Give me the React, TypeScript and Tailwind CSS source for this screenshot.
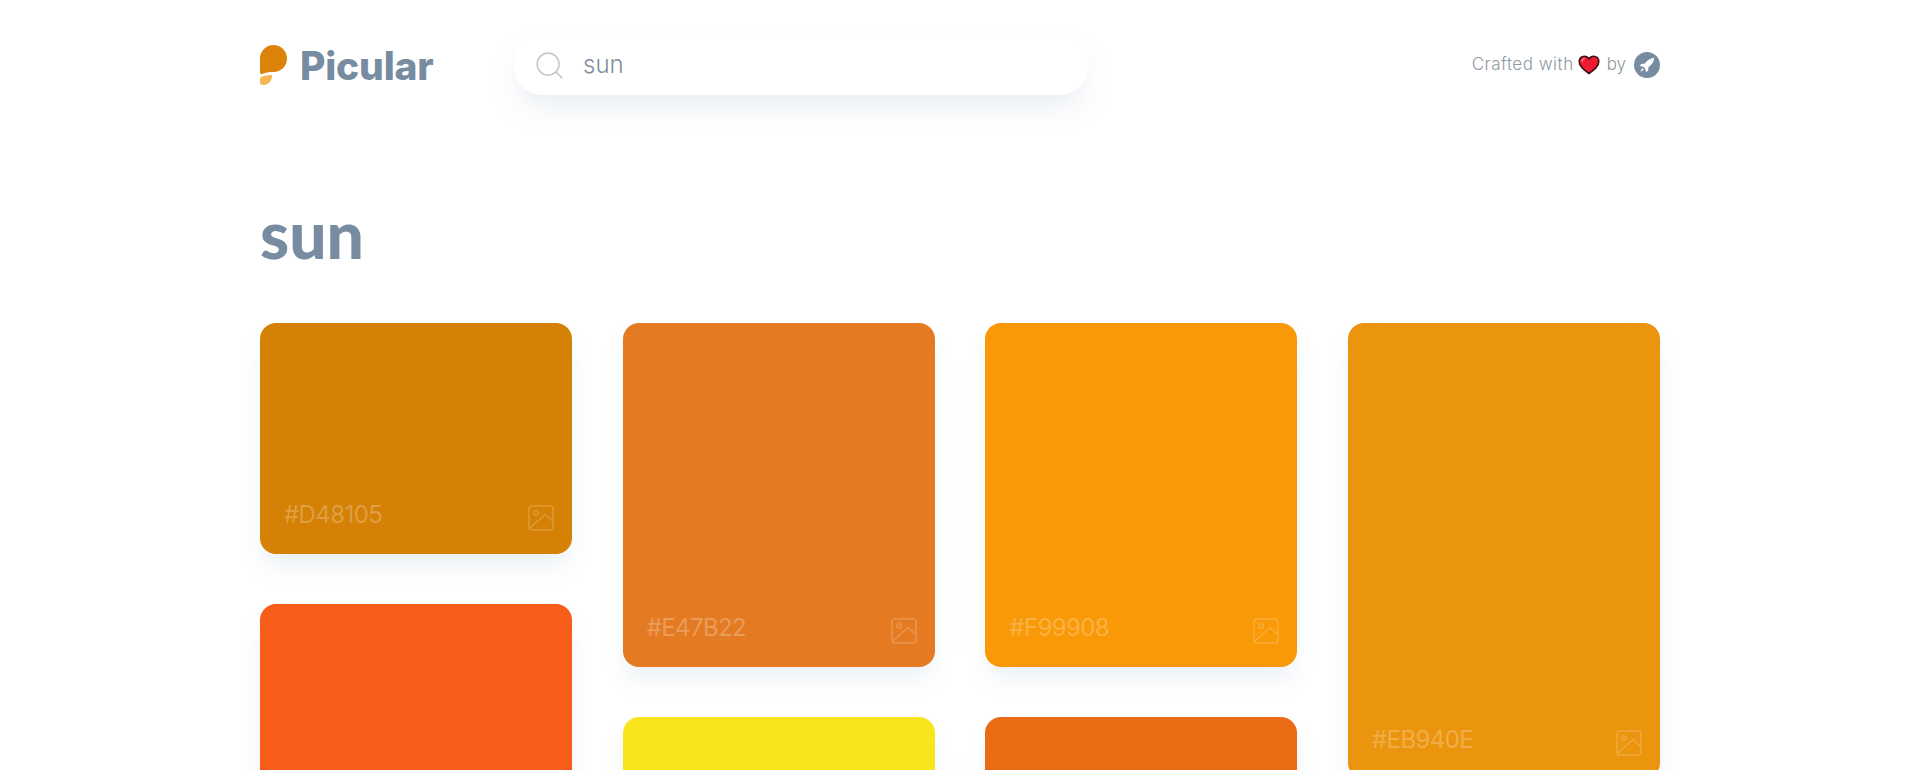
import React from 'react';
import { Search } from 'lucide-react';

interface Swatch {
  color: string;
  height: string;
  hex?: string;
}

const columns: Swatch[][] = [
  [
    { color: 'bg-[#D48105]', height: 'h-[231px]', hex: '#D48105' },
    { color: 'bg-[#F85C1A]', height: 'h-[344px]' },
  ],
  [
    { color: 'bg-[#E47B22]', height: 'h-[344px]', hex: '#E47B22' },
    { color: 'bg-[#F8E51C]', height: 'h-[344px]' },
  ],
  [
    { color: 'bg-[#F99908]', height: 'h-[344px]', hex: '#F99908' },
    { color: 'bg-[#EB6A14]', height: 'h-[344px]' },
  ],
  [{ color: 'bg-[#EB940E]', height: 'h-[456px]', hex: '#EB940E' }],
];

const Logo = () => (
  <svg width="27" height="40" viewBox="0 0 27 40" className="shrink-0">
    <path d="M0 13.5A13.5 13.5 0 0 1 27 13.5C27 21.5 21 27 13.5 27C9 27 5 27.5 2.5 29C1 29.5 0 28.5 0 27Z" fill="#DC8409" />
    <path d="M2.5 31.5C5 30.5 9 30 12 30C12.5 35 9 40 3 40C1 40 0 39 0 37V34C0 32.5 1 32 2.5 31.5Z" fill="#F9B654" />
  </svg>
);

const Heart = () => (
  <svg width="22" height="20" viewBox="0 0 22 20" className="shrink-0">
    <path
      d="M11 18.5C6 15 1.2 11.5 1.2 6.5C1.2 3.3 3.6 1.2 6.3 1.2C8.2 1.2 10 2.2 11 4C12 2.2 13.8 1.2 15.7 1.2C18.4 1.2 20.8 3.3 20.8 6.5C20.8 11.5 16 15 11 18.5Z"
      fill="#EE1C2E"
      stroke="#3A1016"
      strokeWidth="1.6"
      strokeLinejoin="round"
    />
    <path d="M4 6.5C4 5 5 4 6.3 3.9" fill="none" stroke="#FF7C86" strokeWidth="1.5" strokeLinecap="round" />
  </svg>
);

const RocketBadge = () => (
  <svg width="26" height="26" viewBox="0 0 25 25" className="shrink-0">
    <circle cx="12.5" cy="12.5" r="12.5" fill="#778CA0" />
    <path d="M19.5 5.5C15.5 6 12.5 8 10.5 11L7 11.5L5.5 13.5L8.7 14L11 16.3L11.5 19.5L13.5 18L14 14.5C17 12.5 19 9.5 19.5 5.5Z" fill="#fff" />
    <path d="M8 15.5L9.5 17L6 19Z" fill="#fff" />
  </svg>
);

// square frame with a dot and a diagonal slope, as on the swatch cards
const ImageMark = () => (
  <svg width="26" height="26" viewBox="0 0 26 26" fill="none" stroke="#fff" strokeWidth="1.5" className="shrink-0 opacity-20">
    <rect x="1" y="1" width="24" height="24" rx="3" />
    <circle cx="8" cy="8" r="2.2" />
    <path d="M1.5 23.5L17 9.5L24.5 16" strokeLinejoin="round" />
  </svg>
);

const SwatchCard = ({ swatch }: { swatch: Swatch }) => (
  <div
    className={`${swatch.color} ${swatch.height} w-[312px] shrink-0 rounded-[16px] shadow-[0_15px_25px_-5px_rgba(120,150,180,0.16)] flex items-end justify-between pl-6 pr-[18px] pb-[23px]`}
  >
    {swatch.hex && (
      <>
        <span className="text-[24px] leading-[30px] mb-[1px] tracking-[-0.6px] text-white/25 font-['Inter',sans-serif] font-normal">
          {swatch.hex}
        </span>
        <ImageMark />
      </>
    )}
  </div>
);

export default function App() {
  return (
    <div className="h-[770px] overflow-hidden bg-white font-['Inter',sans-serif]">
      <div className="w-[1400px] mx-auto">
        {/* Header */}
        <header className="flex items-center h-[60px] mt-[35px]">
          <div className="flex items-center w-[254px] gap-[13px]">
            <Logo />
            <span className="font-['Inter',sans-serif] text-[39px] leading-none font-extrabold text-[#778CA0] tracking-[-0.2px]">
              Picular
            </span>
          </div>
          <div className="w-[574px] h-[60px] rounded-[28px] bg-white shadow-[0_15px_30px_-5px_rgba(120,150,180,0.18)] flex items-center pl-[19px] gap-[17px]">
            <Search size={33} strokeWidth={1.1} className="text-[#C4C9CE]" />
            <span className="font-['Inter',sans-serif] font-light text-[24px] text-[#7F8FA1]">sun</span>
          </div>
          <div className="ml-auto flex items-center text-[#8E98A2] text-[17px] font-['Inter',sans-serif] font-light">
            <span className="tracking-[0.5px]">Crafted with</span>
            <span className="ml-[4px]">
              <Heart />
            </span>
            <span className="ml-[7px] mr-[8px]">by</span>
            <RocketBadge />
          </div>
        </header>

        {/* Title */}
        <h1 className="mt-[101px] text-[66px] leading-[72px] pt-[2px] -mb-[2px] font-black text-[#778CA0] font-['Lato',sans-serif]">sun</h1>

        {/* Swatches */}
        <div className="mt-[55px] flex justify-between">
          {columns.map((col, i) => (
            <div key={i} className="flex flex-col gap-[50px]">
              {col.map((swatch) => (
                <SwatchCard key={swatch.color} swatch={swatch} />
              ))}
            </div>
          ))}
        </div>
      </div>
    </div>
  );
}
